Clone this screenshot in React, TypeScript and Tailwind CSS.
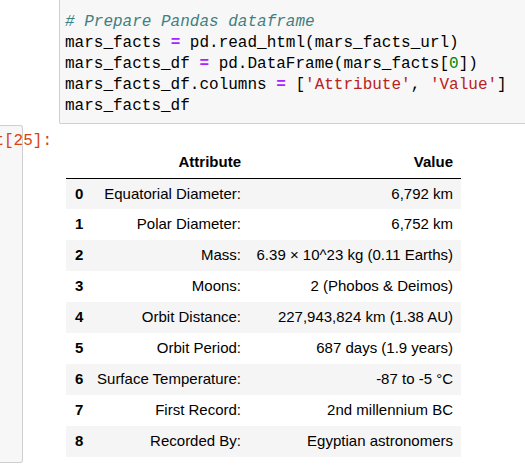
import React from "react";

const rows: [string, string, string][] = [
  ["0", "Equatorial Diameter:", "6,792 km"],
  ["1", "Polar Diameter:", "6,752 km"],
  ["2", "Mass:", "6.39 × 10^23 kg (0.11 Earths)"],
  ["3", "Moons:", "2 (Phobos & Deimos)"],
  ["4", "Orbit Distance:", "227,943,824 km (1.38 AU)"],
  ["5", "Orbit Period:", "687 days (1.9 years)"],
  ["6", "Surface Temperature:", "-87 to -5 °C"],
  ["7", "First Record:", "2nd millennium BC"],
  ["8", "Recorded By:", "Egyptian astronomers"],
];

const mono = { fontFamily: '"Liberation Mono", "DejaVu Sans Mono", monospace' };
const sans = { fontFamily: '"Liberation Sans", Arial, sans-serif' };

export default function App() {
  const Eq = () => <span className="text-[#aa22ff] font-bold">=</span>;
  return (
    <div className="w-[525px] h-[471px] overflow-hidden bg-white relative">
      <div
        className="ml-[59px] w-[480px] bg-[#f7f7f7] border-l border-b border-[#cfcfcf] rounded-bl-[2px] pt-[12px] pb-[6px] pl-[5px] text-[16px] leading-[21px] text-black whitespace-pre"
        style={mono}
      >
        <div className="italic text-[#408080]"># Prepare Pandas dataframe</div>
        <div>
          mars_facts <Eq /> pd.read_html(mars_facts_url)
        </div>
        <div>
          mars_facts_df <Eq /> pd.DataFrame(mars_facts[<span className="text-[#008800]">0</span>])
        </div>
        <div>
          mars_facts_df.columns <Eq /> [<span className="text-[#ba2121]">'Attribute'</span>,{" "}
          <span className="text-[#ba2121]">'Value'</span>]
        </div>
        <div>mars_facts_df</div>
      </div>

      <div className="flex mt-[1px] relative">
        <div className="w-[23px] h-[338px] bg-[#f7f7f7] border-t border-r border-b border-[#cfcfcf] rounded-tr-[3px] rounded-br-[3px] shrink-0" />
        <div
          className="absolute left-[-40px] top-[6px] w-[92px] text-right text-[16px] leading-[21px] text-[#d84315] whitespace-pre"
          style={mono}
        >
          Out[25]:
        </div>
        <div className="ml-[43px] mt-[22px]" style={sans}>
          <table className="border-collapse text-[15px] text-black">
            <thead>
              <tr className="h-[31px] border-b border-black">
                <th className="w-[25px] p-0"></th>
                <th className="w-[158px] pr-[8px] text-right font-bold">Attribute</th>
                <th className="w-[212px] pr-[8px] text-right font-bold">Value</th>
              </tr>
            </thead>
            <tbody>
              {rows.map((r, i) => (
                <tr key={r[0]} className={i % 2 === 0 ? "h-[31px] bg-[#f5f5f5]" : "h-[31px] bg-white"}>
                  <td className="pl-[9px] font-bold text-left">{r[0]}</td>
                  <td className="pr-[8px] text-right whitespace-nowrap">{r[1]}</td>
                  <td className="pr-[8px] text-right whitespace-nowrap">{r[2]}</td>
                </tr>
              ))}
            </tbody>
          </table>
        </div>
      </div>
    </div>
  );
}
